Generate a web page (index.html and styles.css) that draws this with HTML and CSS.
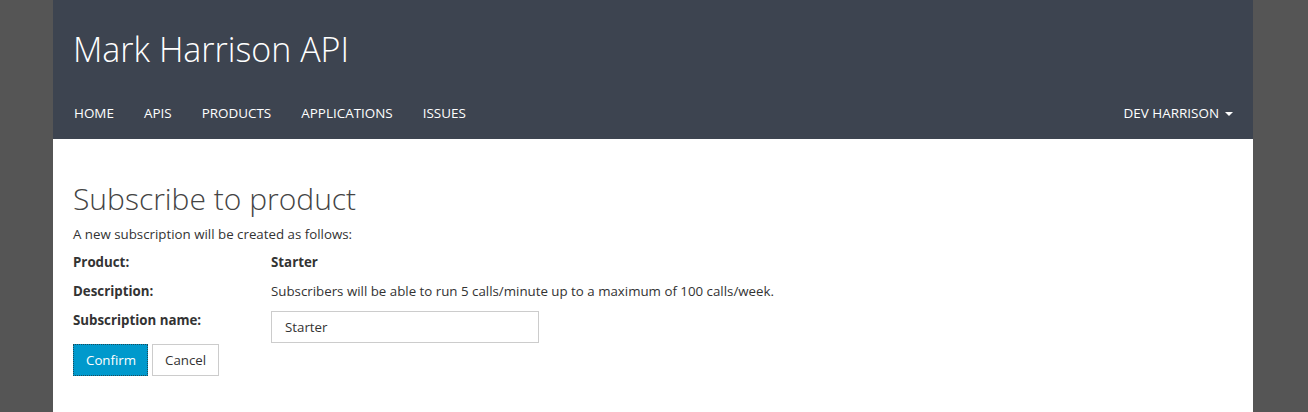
FILE: index.html
```html
<!DOCTYPE html>
<html>
<head>
<meta charset="utf-8">
<link rel="stylesheet" href="styles.css">
</head>
<body>
<div class="page">
  <header class="header">
    <div class="brand">Mark Harrison API</div>
    <nav class="nav">
      <ul class="nav-left">
        <li>HOME</li>
        <li>APIS</li>
        <li>PRODUCTS</li>
        <li>APPLICATIONS</li>
        <li>ISSUES</li>
      </ul>
      <div class="nav-right">DEV HARRISON <span class="caret"></span></div>
    </nav>
  </header>
  <main class="content">
    <h1 class="title">Subscribe to product</h1>
    <p class="intro">A new subscription will be created as follows:</p>
    <div class="details">
      <div class="label">Product:</div>
      <div class="value strong">Starter</div>
      <div class="label">Description:</div>
      <div class="value">Subscribers will be able to run 5 calls/minute up to a maximum of 100 calls/week.</div>
      <div class="label">Subscription name:</div>
      <div class="value"><input class="input" type="text" value="Starter"></div>
    </div>
    <div class="actions">
      <button class="btn btn-primary">Confirm</button>
      <button class="btn btn-default">Cancel</button>
    </div>
  </main>
</div>
</body>
</html>
```
FILE: styles.css
```css
html, body {
  margin: 0;
  padding: 0;
  background: #555555;
  font-family: "Open Sans", "Noto Sans", sans-serif;
}
.page {
  width: 1200px;
  margin: 0 0 0 53px;
  background: #ffffff;
  min-height: 412px;
}
.header {
  background: #3d4450;
  height: 139px;
  padding: 0 20px;
  box-sizing: border-box;
  color: #ffffff;
}
.brand {
  font-weight: 300;
  font-size: 34px;
  line-height: 40px;
  padding-top: 29px;
  height: 40px;
}
.nav {
  display: flex;
  justify-content: space-between;
  align-items: center;
  margin-top: 35px;
  font-size: 13.45px;
}
.nav-left {
  display: flex;
  gap: 30px;
  list-style: none;
  margin: 0;
  padding: 0 0 0 1px;
}
.nav-right {
  display: flex;
  align-items: center;
  gap: 6px;
}
.caret {
  width: 0;
  height: 0;
  border-left: 4px solid transparent;
  border-right: 4px solid transparent;
  border-top: 4px solid #ffffff;
  margin-top: 2px;
}
.content {
  padding: 40px 20px 0;
  color: #333333;
  font-size: 13.3px;
}
.title {
  margin: 0;
  font-weight: 300;
  font-size: 30px;
  line-height: 40px;
  color: #444444;
}
.intro {
  margin: 6px 0 10px;
  line-height: 18px;
}
.details {
  display: grid;
  grid-template-columns: 198px 1fr;
  row-gap: 11px;
  line-height: 18px;
}
.label, .strong {
  font-weight: 700;
}
.input {
  box-sizing: border-box;
  width: 268px;
  height: 32px;
  margin-top: 0;
  border: 1px solid #cccccc;
  padding: 0 13px;
  font-family: inherit;
  font-size: 13.3px;
  color: #333333;
}
.actions {
  display: flex;
  gap: 4px;
  margin-top: 1px;
}
.btn {
  box-sizing: border-box;
  height: 32px;
  padding: 0 12px;
  font-family: inherit;
  font-size: 13.3px;
}
.btn-primary {
  background: #0099cc;
  color: #ffffff;
  border: 1px dotted #1d4a5a;
  width: 75px;
}
.btn-default {
  background: #ffffff;
  color: #333333;
  border: 1px solid #cccccc;
  width: 67px;
}
```
